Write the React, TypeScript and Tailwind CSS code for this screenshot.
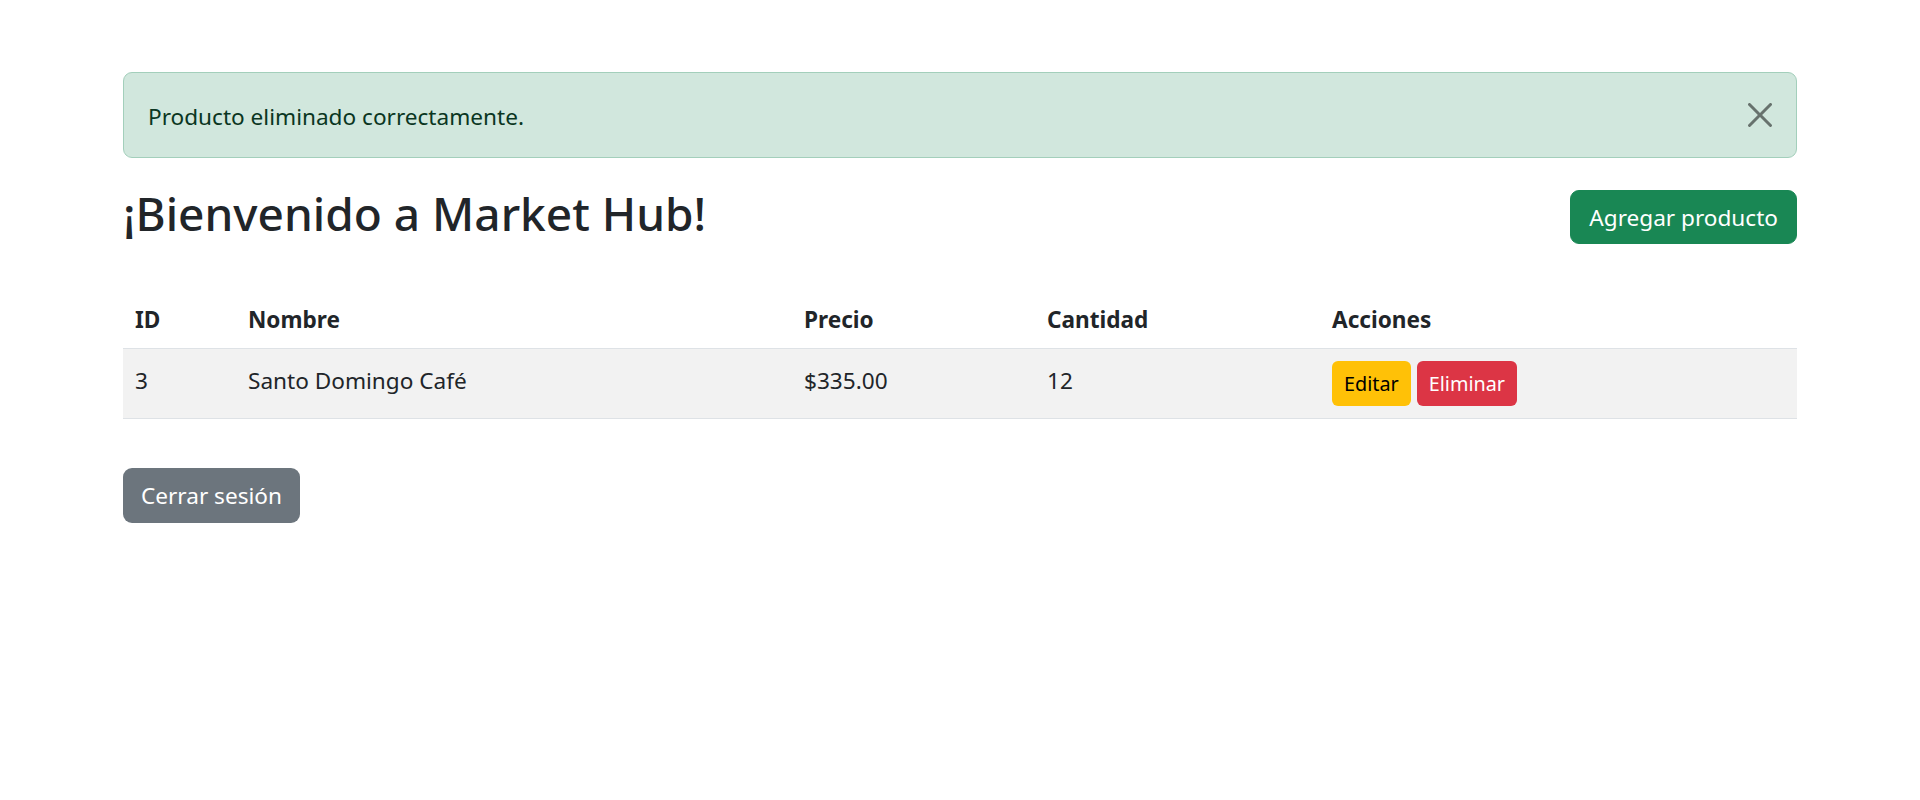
import React from "react";

const FONT = '"Noto Sans", "Segoe UI", sans-serif';

function CloseIcon() {
  return (
    <svg viewBox="0 0 16 16" className="h-6 w-6 opacity-50" fill="#000">
      <path d="M.293.293a1 1 0 0 1 1.414 0L8 6.586 14.293.293a1 1 0 1 1 1.414 1.414L9.414 8l6.293 6.293a1 1 0 0 1-1.414 1.414L8 9.414l-6.293 6.293a1 1 0 0 1-1.414-1.414L6.586 8 .293 1.707a1 1 0 0 1 0-1.414z" />
    </svg>
  );
}

export default function App() {
  return (
    <div className="min-h-screen bg-white text-[#212529]" style={{ fontFamily: FONT }}>
      <div className="mx-auto w-[1674px] pt-[72px]">
        {/* Alerta */}
        <div className="mb-6 flex items-center justify-between rounded-[9px] border-[1.5px] border-[#a3cfbb] bg-[#d1e7dd] px-6 pt-[26px] pb-[22px] text-[22.6px] leading-[36px] text-[#0a3622]">
          <span>Producto eliminado correctamente.</span>
          <span className="-mt-[4px]">
            <CloseIcon />
          </span>
        </div>

        {/* Encabezado */}
        <div className="mb-9 flex items-center justify-between">
          <h2 className="mb-[9px] pt-[3px] text-[46px] leading-[57.6px] font-medium">¡Bienvenido a Market Hub!</h2>
          <button className="rounded-[9px] border-[1.5px] border-[#198754] bg-[#198754] px-[18px] pt-[9px] pb-[7px] text-[22.6px] leading-[36px] text-white">
            Agregar producto
          </button>
        </div>

        {/* Tabla */}
        <table className="w-full border-collapse text-left text-[22.6px] leading-[36px]">
          <thead>
            <tr className="border-b-[1.5px] border-[#dee2e6]">
              <th className="w-[113px] px-3 pt-[14px] pb-[10px] align-bottom font-bold">ID</th>
              <th className="w-[556px] px-3 pt-[14px] pb-[10px] align-bottom font-bold">Nombre</th>
              <th className="w-[243px] px-3 pt-[14px] pb-[10px] align-bottom font-bold">Precio</th>
              <th className="w-[285px] px-3 pt-[14px] pb-[10px] align-bottom font-bold">Cantidad</th>
              <th className="px-3 pt-[14px] pb-[10px] align-bottom font-bold">Acciones</th>
            </tr>
          </thead>
          <tbody>
            <tr className="border-b-[1.5px] border-[#dee2e6] bg-[#f2f2f2]">
              <td className="px-3 pt-[14px] pb-[10px] align-top">3</td>
              <td className="px-3 pt-[14px] pb-[10px] align-top">Santo Domingo Café</td>
              <td className="px-3 pt-[14px] pb-[10px] align-top">$335.00</td>
              <td className="px-3 pt-[14px] pb-[10px] align-top">12</td>
              <td className="px-3 py-3 align-top">
                <div className="flex gap-[6px]">
                  <button className="rounded-[6px] bg-[#ffc107] px-3 py-[7px] text-[19.8px] leading-[31.5px] text-black">
                    Editar
                  </button>
                  <button className="rounded-[6px] bg-[#dc3545] px-3 py-[7px] text-[19.8px] leading-[31.5px] text-white">
                    Eliminar
                  </button>
                </div>
              </td>
            </tr>
          </tbody>
        </table>

        <div className="mt-[49px]">
          <button className="rounded-[9px] bg-[#6c757d] px-[18px] py-[9.5px] text-[22.6px] leading-[36px] text-white">
            Cerrar sesión
          </button>
        </div>
      </div>
    </div>
  );
}
